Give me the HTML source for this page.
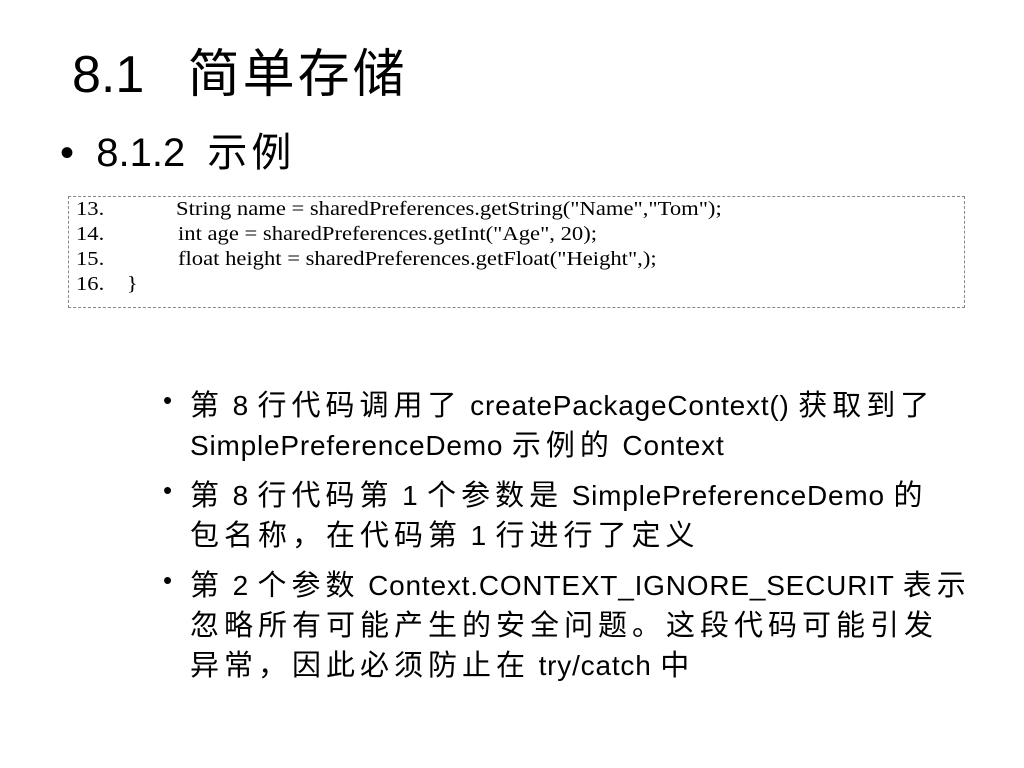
<!DOCTYPE html>
<html><head><meta charset="utf-8"><style>
body{margin:0;width:1024px;height:768px;background:#fff;position:relative;overflow:hidden;font-family:"Liberation Sans","Noto Sans CJK SC",sans-serif;color:#000}
.a{position:absolute;white-space:nowrap}
.code{position:absolute;left:68px;top:196px;width:895px;height:110px;border:1px dashed #888}
.cl{position:absolute;font-family:"Liberation Serif",serif;font-size:20px;white-space:nowrap;transform-origin:0 0;transform:scaleX(1.13)}
.b{font-size:29px;letter-spacing:5px}
.b i{font-style:normal;letter-spacing:0.8px;font-size:28px}
.d{position:absolute;font-size:26px;left:163px}
</style></head><body>
<div class="a" style="left:72px;top:32px;font-size:52px">8.1&nbsp;&nbsp;&nbsp;<span style="letter-spacing:3px">简单存储</span></div>
<div class="a" style="left:60px;top:120px;font-size:40px">•&nbsp;&nbsp;8.1.2&nbsp;&nbsp;<span style="letter-spacing:4px">示例</span></div>
<div class="code"></div>
<div class="cl" style="left:76px;top:198px">13.</div><div class="cl" style="left:176px;top:198px">String name = sharedPreferences.getString("Name","Tom");</div>
<div class="cl" style="left:76px;top:223px">14.</div><div class="cl" style="left:178px;top:223px">int age = sharedPreferences.getInt("Age", 20);</div>
<div class="cl" style="left:76px;top:248px">15.</div><div class="cl" style="left:178px;top:248px">float height = sharedPreferences.getFloat("Height",);</div>
<div class="cl" style="left:76px;top:273px">16.&nbsp;&nbsp;&nbsp;&nbsp;}</div>
<div class="d" style="top:385px">•</div>
<div class="a b" style="left:190px;top:382px">第<i> 8 </i>行代码调用了<i> createPackageContext() </i>获取到了</div>
<div class="a b" style="left:190px;top:422px"><i>SimplePreferenceDemo </i>示例的<i> Context</i></div>
<div class="d" style="top:475px">•</div>
<div class="a b" style="left:190px;top:472px">第<i> 8 </i>行代码第<i> 1 </i>个参数是<i> SimplePreferenceDemo </i>的</div>
<div class="a b" style="left:190px;top:512px">包名称，在代码第<i> 1 </i>行进行了定义</div>
<div class="d" style="top:565px">•</div>
<div class="a b" style="left:190px;top:562px">第<i> 2 </i>个参数<i> Context.CONTEXT_IGNORE_SECURIT </i>表示</div>
<div class="a b" style="left:190px;top:602px">忽略所有可能产生的安全问题。这段代码可能引发</div>
<div class="a b" style="left:190px;top:642px">异常，因此必须防止在<i> try/catch </i>中</div>
</body></html>
